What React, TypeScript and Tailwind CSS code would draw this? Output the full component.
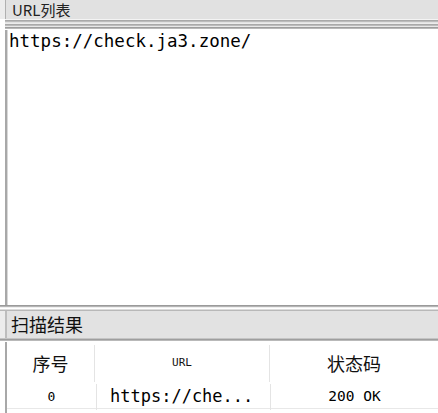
import React from "react";

const mono = { fontFamily: '"DejaVu Sans Mono", "Liberation Mono", monospace' };

function Stripes({ colors }: { colors: string[] }) {
  return (
    <div className="flex flex-col">
      {colors.map((c, i) => (
        <div key={i} className="h-px w-full" style={{ background: c }} />
      ))}
    </div>
  );
}

export default function App() {
  return (
    <div
      className="w-[438px] h-[413px] overflow-hidden bg-white text-black flex flex-col"
      style={{ fontFamily: '"Noto Sans CJK SC", "Liberation Sans", sans-serif' }}
    >
      {/* URL list header */}
      <div className="h-[19px] bg-[#e4e4e4] flex">
        <div className="w-[5px] bg-[#ececec]" />
        <div className="flex-1 border-l border-[#b0b0b0] bg-[#e1e1e1] pl-[6px] flex items-center">
          <span className="text-[15px] leading-[18px] text-[#222]">URL列表</span>
        </div>
      </div>
      <div className="flex">
        <div className="w-[5px] bg-white" />
        <div className="flex-1">
          <Stripes
            colors={["#f4f4f4", "#a9a9a9", "#bcbcbc", "#e2e2e2", "#ececec", "#a9a9a9", "#bcbcbc", "#e8e8e8", "#9e9e9e", "#b9b9b9", "#ffffff"]}
          />
        </div>
      </div>
      {/* URL textarea */}
      <div className="h-[275px] flex">
        <div className="w-[5px] bg-white" />
        <div className="w-[2px] bg-[#a8a8a8]" />
        <div className="w-px bg-[#d8d8d8]" />
        <div className="flex-1 pl-[1px] pt-[1px]">
          <div className="text-[17.5px] leading-[20px] text-[#000]" style={mono}>
            https://check.ja3.zone/
          </div>
        </div>
      </div>
      <Stripes colors={["#9a9a9a", "#b4b4b4", "#f0f0f0", "#ffffff", "#dcdcdc", "#b8b8b8"]} />
      {/* Scan result header */}
      <div className="flex h-[27px]">
        <div className="w-[5px] bg-[#ececec]" />
        <div className="w-[2px] bg-[#bdbdbd]" />
        <div className="flex-1 bg-[#e2e2e2] pl-[4px] flex items-center">
          <span className="text-[18px] leading-[27px] text-[#111]">扫描结果</span>
        </div>
      </div>
      <Stripes colors={["#c4c4c4", "#9e9e9e", "#b9b9b9", "#ffffff"]} />
      {/* table */}
      <div className="flex flex-1">
        <div className="w-[5px] bg-white" />
        <div className="w-[2px] bg-[#a8a8a8]" />
        <div className="flex-1 flex flex-col">
          <div className="h-[3px]" />
          <div className="grid grid-cols-[88px_175px_1fr] h-[37px]">
            <div className="border-r border-[#e4e4e4] flex items-center justify-center text-[18px] text-[#111]">序号</div>
            <div className="border-r border-[#e4e4e4] flex items-center justify-center text-[11px] text-[#111]" style={mono}>URL</div>
            <div className="flex items-center justify-center text-[18px] text-[#111]">状态码</div>
          </div>
          <div className="h-[2px]" />
          <div className="grid grid-cols-[90px_174px_1fr] h-[25px] border-b border-[#e8e8e8]">
            <div className="border-r border-[#e4e4e4] flex items-center justify-center text-[13px] text-[#000]" style={mono}>0</div>
            <div className="border-r border-[#e4e4e4] flex items-center pl-[13px] text-[17px] text-[#000]" style={mono}>https://che...</div>
            <div className="flex items-center justify-center text-[14.5px] text-[#000]" style={mono}>200 OK</div>
          </div>
        </div>
      </div>
    </div>
  );
}
